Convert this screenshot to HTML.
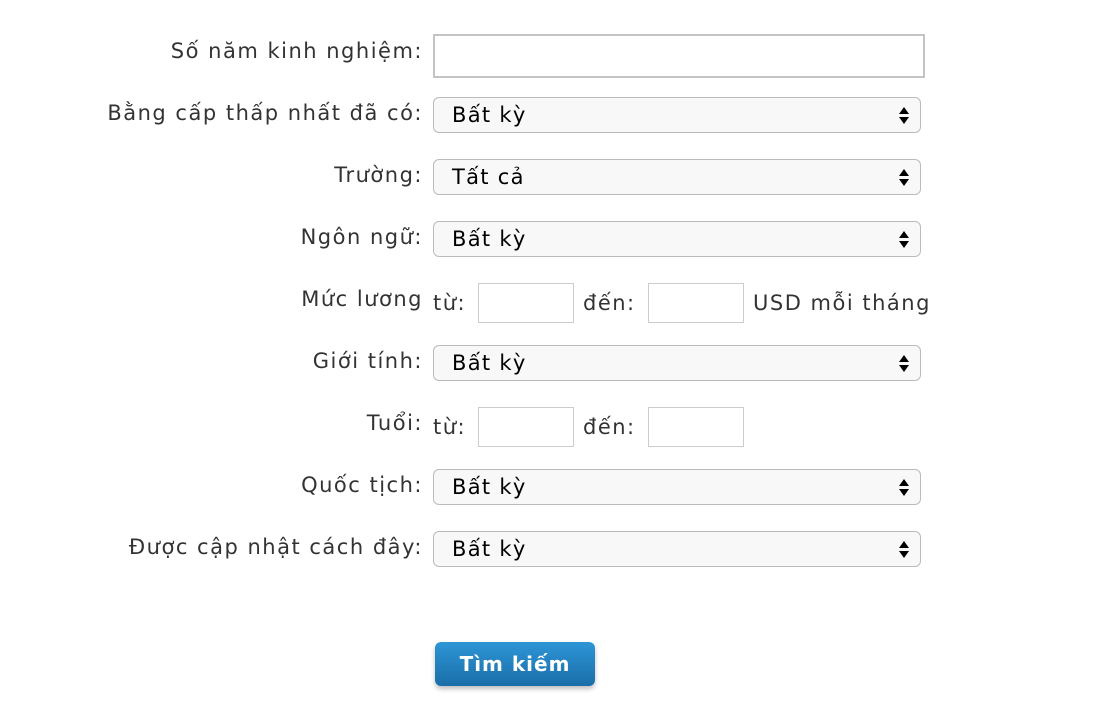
<!DOCTYPE html>
<html><head><meta charset="utf-8"><style>
body{margin:0;width:1112px;height:710px;background:#fff;font-family:"DejaVu Sans","Liberation Sans",sans-serif;font-size:21px;letter-spacing:1.5px;color:#333;position:relative;overflow:hidden}
.l{position:absolute;right:689px;white-space:nowrap;line-height:24px}
.t{position:absolute;white-space:nowrap;line-height:24px}
.sel{position:absolute;left:433px;width:486px;height:34px;border:1px solid #bbb;border-radius:6px;background:#f8f8f8;box-sizing:content-box}
.sel span{position:absolute;left:18px;top:5px;color:#000;font-size:21px;letter-spacing:1.3px;line-height:24px}
.arr{position:absolute;right:11px;top:8px}
.inp{position:absolute;border:1px solid #ccc;background:#fff}
.btn{position:absolute;left:435px;top:642px;width:160px;height:44px;border-radius:6px;background:linear-gradient(#2e95d6,#1a6ea8);color:#fff;font-weight:bold;font-size:20px;letter-spacing:1px;text-align:center;line-height:44px;box-shadow:0 3px 5px rgba(0,0,0,.25)}
</style></head><body>
<div class="l" style="top:39px">Số năm kinh nghiệm:</div>
<div class="inp" style="left:433px;top:34px;width:488px;height:40px;border:2px solid #c4c4c4"></div>

<div class="l" style="top:101px">Bằng cấp thấp nhất đã có:</div>
<div class="sel" style="top:97px"><span>Bất kỳ</span><svg class="arr" width="10" height="18"><path d="M5 1L10 8H0Z M0 11H10L5 18Z" fill="#000"/></svg></div>

<div class="l" style="top:163px">Trường:</div>
<div class="sel" style="top:159px"><span>Tất cả</span><svg class="arr" width="10" height="18"><path d="M5 1L10 8H0Z M0 11H10L5 18Z" fill="#000"/></svg></div>

<div class="l" style="top:225px">Ngôn ngữ:</div>
<div class="sel" style="top:221px"><span>Bất kỳ</span><svg class="arr" width="10" height="18"><path d="M5 1L10 8H0Z M0 11H10L5 18Z" fill="#000"/></svg></div>

<div class="l" style="top:287px">Mức lương</div>
<div class="t" style="left:433px;top:291px">từ:</div>
<div class="inp" style="left:478px;top:283px;width:94px;height:38px"></div>
<div class="t" style="left:583px;top:291px">đến:</div>
<div class="inp" style="left:648px;top:283px;width:94px;height:38px"></div>
<div class="t" style="left:753px;top:291px">USD mỗi tháng</div>

<div class="l" style="top:349px">Giới tính:</div>
<div class="sel" style="top:345px"><span>Bất kỳ</span><svg class="arr" width="10" height="18"><path d="M5 1L10 8H0Z M0 11H10L5 18Z" fill="#000"/></svg></div>

<div class="l" style="top:411px">Tuổi:</div>
<div class="t" style="left:433px;top:415px">từ:</div>
<div class="inp" style="left:478px;top:407px;width:94px;height:38px"></div>
<div class="t" style="left:583px;top:415px">đến:</div>
<div class="inp" style="left:648px;top:407px;width:94px;height:38px"></div>

<div class="l" style="top:473px">Quốc tịch:</div>
<div class="sel" style="top:469px"><span>Bất kỳ</span><svg class="arr" width="10" height="18"><path d="M5 1L10 8H0Z M0 11H10L5 18Z" fill="#000"/></svg></div>

<div class="l" style="top:535px">Được cập nhật cách đây:</div>
<div class="sel" style="top:531px"><span>Bất kỳ</span><svg class="arr" width="10" height="18"><path d="M5 1L10 8H0Z M0 11H10L5 18Z" fill="#000"/></svg></div>

<div class="btn">Tìm kiếm</div>
</body></html>
